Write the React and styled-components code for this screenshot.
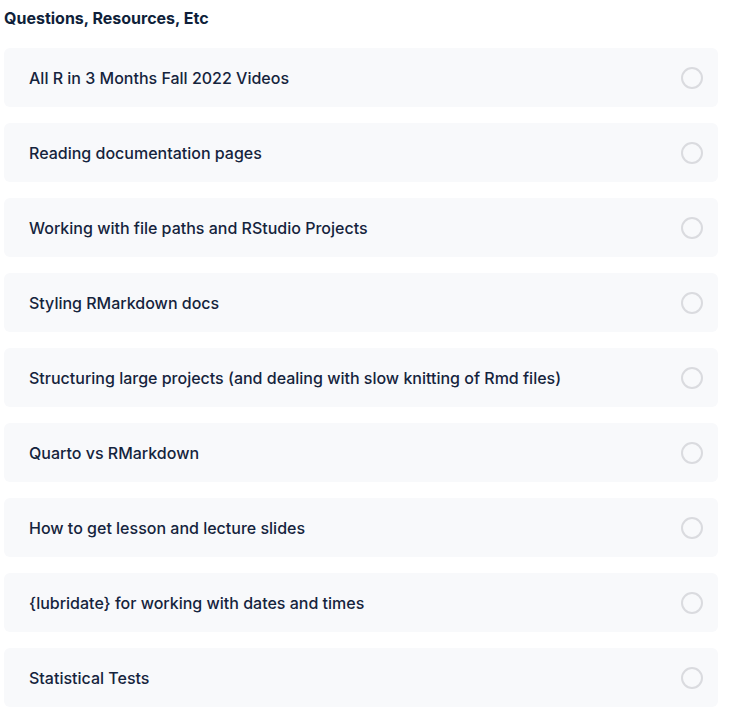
import React from 'react';
import styled, { createGlobalStyle } from 'styled-components';

const items = [
  'All R in 3 Months Fall 2022 Videos',
  'Reading documentation pages',
  'Working with file paths and RStudio Projects',
  'Styling RMarkdown docs',
  'Structuring large projects (and dealing with slow knitting of Rmd files)',
  'Quarto vs RMarkdown',
  'How to get lesson and lecture slides',
  '{lubridate} for working with dates and times',
  'Statistical Tests',
];

const Global = createGlobalStyle`
  body {
    margin: 0;
    background: #fff;
    font-family: Inter, "Noto Sans", sans-serif;
  }
`;

const Page = styled.div`
  padding: 0 28px 0 4px;
`;

const Title = styled.h2`
  margin: 0;
  padding-top: 8px;
  height: 48px;
  box-sizing: border-box;
  font-size: 16px;
  font-weight: 700;
  color: #0f1f3a;
`;

const List = styled.div`
  display: flex;
  flex-direction: column;
  gap: 16px;
`;

const Card = styled.div`
  display: flex;
  align-items: center;
  justify-content: space-between;
  height: 59px;
  padding: 0 15px 0 25px;
  background: #f8f9fb;
  border-radius: 6px;
`;

const Label = styled.span`
  font-size: 16px;
  font-weight: 500;
  color: #15243d;
`;

const Check = styled.span`
  width: 18px;
  height: 18px;
  border: 2px solid #dadbdf;
  border-radius: 50%;
  box-sizing: content-box;
`;

const App = () => (
  <Page>
    <Global />
    <Title>Questions, Resources, Etc</Title>
    <List>
      {items.map(text => (
        <Card key={text}>
          <Label>{text}</Label>
          <Check />
        </Card>
      ))}
    </List>
  </Page>
);

export default App;
